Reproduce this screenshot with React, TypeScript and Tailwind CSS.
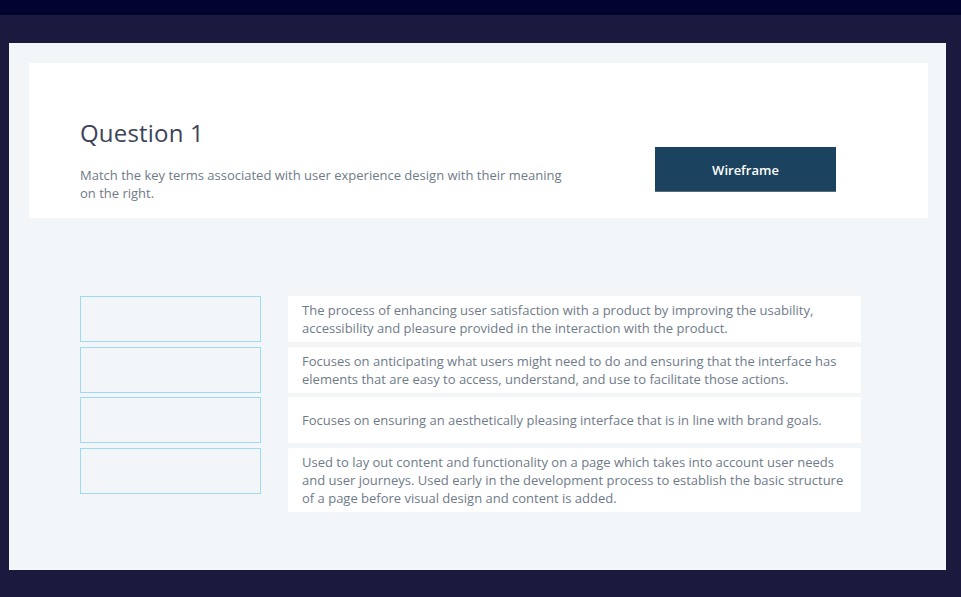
const terms = [
  'The process of enhancing user satisfaction with a product by improving the usability, accessibility and pleasure provided in the interaction with the product.',
  'Focuses on anticipating what users might need to do and ensuring that the interface has elements that are easy to access, understand, and use to facilitate those actions.',
  'Focuses on ensuring an aesthetically pleasing interface that is in line with brand goals.',
  'Used to lay out content and functionality on a page which takes into account user needs and user journeys. Used early in the development process to establish the basic structure of a page before visual design and content is added.',
]

export default function App() {
  return (
    <div className="min-h-[597px] bg-[#1b1a3e] font-['Open_Sans',sans-serif]">
      <div className="h-[15px] bg-[#030330]" />
      <div className="pl-[9px] pr-[15px] pt-[28px] pb-[27px]">
        <div className="bg-[#f3f6f9] pl-[20px] pr-[18px] pt-[20px] pb-[58px]">
          <div className="flex bg-white pl-[51px] pt-[54px] pb-[16px]">
            <div className="w-[575px]">
              <h1 className="text-[24px] leading-[32px] font-normal tracking-[0.2px] text-[#3d4358]">Question 1</h1>
              <p className="mt-[17px] w-[495px] text-[13px] leading-[18px] text-[#6f7b89]">
                Match the key terms associated with user experience design with their meaning on the right.
              </p>
            </div>
            <button className="mt-[30px] h-[45px] w-[181px] border-b border-[#5d6a78] bg-[#1b435f] pt-[3px] text-[13px] font-semibold text-white">
              Wireframe
            </button>
          </div>

          <div className="mt-[78px] flex items-start gap-[27px] pl-[51px]">
            <div className="flex w-[181px] flex-col gap-[4.6px]">
              {terms.map((_, i) => (
                <div key={i} className="h-[46px] border border-[#9fdaf4] bg-[#f3f6f9]" />
              ))}
            </div>
            <div className="flex w-[573px] flex-col gap-[4.6px]">
              {terms.map((t, i) => (
                <div
                  key={i}
                  className="flex min-h-[46px] items-center bg-white px-[14px] py-[5px] text-[13px] leading-[18px] text-[#6f7b89]"
                >
                  {t}
                </div>
              ))}
            </div>
          </div>
        </div>
      </div>
    </div>
  )
}
